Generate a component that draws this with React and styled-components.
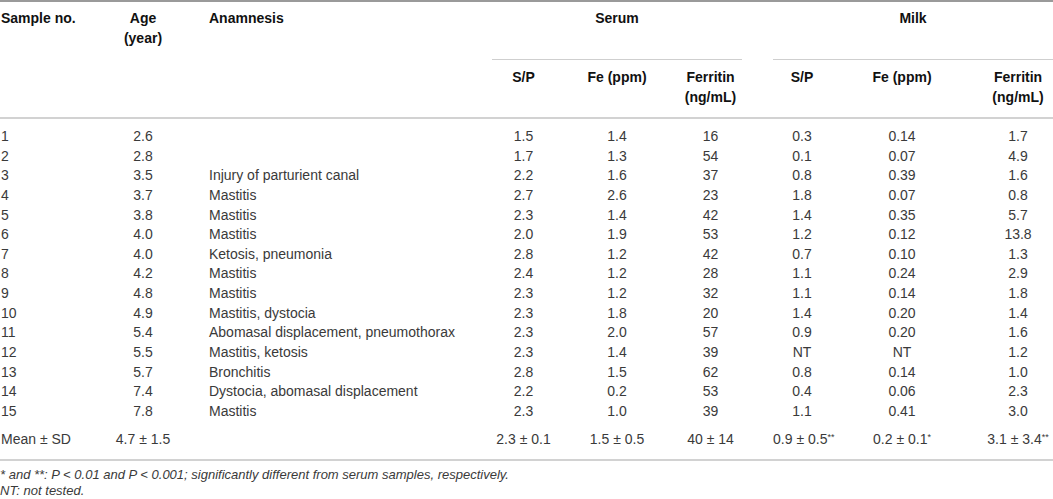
import React from "react";
import styled, { createGlobalStyle } from "styled-components";

const GlobalStyle = createGlobalStyle`
  html, body {
    margin: 0;
    padding: 0;
    background: #fff;
  }
  body {
    font-family: "Liberation Sans", Arial, sans-serif;
    color: #333;
  }
`;

const Page = styled.div`
  width: 1053px;
`;

const Table = styled.table`
  width: 1053px;
  table-layout: fixed;
  border-collapse: collapse;
  font-size: 14px;
  border-top: 2px solid #9a9a9a;
  border-bottom: 2px solid #d2d2d2;
`;

const Head = styled.thead`
  border-bottom: 2px solid #d2d2d2;
`;

const Th = styled.th`
  font-weight: bold;
  color: #111;
  line-height: 20px;
  vertical-align: top;
  padding: ${(p) => (p.$sub ? "7px 0 10px" : "6px 0 0")};
  text-align: ${(p) => p.$align || "center"};
  padding-left: ${(p) => p.$indent || 0}px;
`;

const GroupTh = styled(Th)`
  padding-bottom: 31px;
  border-bottom: 1px solid #cfcfcf;
`;

const Td = styled.td`
  line-height: 19.64px;
  padding: 0;
  padding-left: ${(p) => p.$indent || 0}px;
  text-align: ${(p) => p.$align || "center"};
  color: #3a3a3a;
  white-space: nowrap;
`;

const FirstRow = styled.tr`
  td {
    padding-top: 8px;
  }
`;

const MeanRow = styled.tr`
  td {
    padding-top: 8.4px;
    padding-bottom: 9px;
  }
`;

const Sig = styled.sup`
  font-size: 9px;
  line-height: 0;
  vertical-align: 4px;
`;

const Notes = styled.div`
  margin-top: 6px;
  font-size: 13px;
  line-height: 16px;
  font-style: italic;
  color: #3a3a3a;
`;

const rows = [
  ["1", "2.6", "", "1.5", "1.4", "16", "0.3", "0.14", "1.7"],
  ["2", "2.8", "", "1.7", "1.3", "54", "0.1", "0.07", "4.9"],
  ["3", "3.5", "Injury of parturient canal", "2.2", "1.6", "37", "0.8", "0.39", "1.6"],
  ["4", "3.7", "Mastitis", "2.7", "2.6", "23", "1.8", "0.07", "0.8"],
  ["5", "3.8", "Mastitis", "2.3", "1.4", "42", "1.4", "0.35", "5.7"],
  ["6", "4.0", "Mastitis", "2.0", "1.9", "53", "1.2", "0.12", "13.8"],
  ["7", "4.0", "Ketosis, pneumonia", "2.8", "1.2", "42", "0.7", "0.10", "1.3"],
  ["8", "4.2", "Mastitis", "2.4", "1.2", "28", "1.1", "0.24", "2.9"],
  ["9", "4.8", "Mastitis", "2.3", "1.2", "32", "1.1", "0.14", "1.8"],
  ["10", "4.9", "Mastitis, dystocia", "2.3", "1.8", "20", "1.4", "0.20", "1.4"],
  ["11", "5.4", "Abomasal displacement, pneumothorax", "2.3", "2.0", "57", "0.9", "0.20", "1.6"],
  ["12", "5.5", "Mastitis, ketosis", "2.3", "1.4", "39", "NT", "NT", "1.2"],
  ["13", "5.7", "Bronchitis", "2.8", "1.5", "62", "0.8", "0.14", "1.0"],
  ["14", "7.4", "Dystocia, abomasal displacement", "2.2", "0.2", "53", "0.4", "0.06", "2.3"],
  ["15", "7.8", "Mastitis", "2.3", "1.0", "39", "1.1", "0.41", "3.0"],
];

const pm = " ± ";

const DataCells = ({ row }) => (
  <>
    <Td $align="left" $indent={1}>{row[0]}</Td>
    <Td>{row[1]}</Td>
    <Td $align="left" $indent={33}>{row[2]}</Td>
    <Td>{row[3]}</Td>
    <Td>{row[4]}</Td>
    <Td>{row[5]}</Td>
    <Td />
    <Td>{row[6]}</Td>
    <Td>{row[7]}</Td>
    <Td $indent={10}>{row[8]}</Td>
  </>
);

export default function App() {
  return (
    <Page>
      <GlobalStyle />
      <Table>
        <colgroup>
          <col style={{ width: 110 }} />
          <col style={{ width: 66 }} />
          <col style={{ width: 316 }} />
          <col style={{ width: 63 }} />
          <col style={{ width: 124 }} />
          <col style={{ width: 63 }} />
          <col style={{ width: 31 }} />
          <col style={{ width: 58 }} />
          <col style={{ width: 142 }} />
          <col style={{ width: 80 }} />
        </colgroup>
        <Head>
          <tr>
            <Th rowSpan={2} $align="left" $indent={1}>Sample no.</Th>
            <Th rowSpan={2}>Age<br />(year)</Th>
            <Th rowSpan={2} $align="left" $indent={33}>Anamnesis</Th>
            <GroupTh colSpan={3}>Serum</GroupTh>
            <Th />
            <GroupTh colSpan={3}>Milk</GroupTh>
          </tr>
          <tr>
            <Th $sub>S/P</Th>
            <Th $sub>Fe (ppm)</Th>
            <Th $sub>Ferritin<br />(ng/mL)</Th>
            <Th $sub />
            <Th $sub>S/P</Th>
            <Th $sub>Fe (ppm)</Th>
            <Th $sub $indent={10}>Ferritin<br />(ng/mL)</Th>
          </tr>
        </Head>
        <tbody>
          {rows.map((row, i) =>
            i === 0 ? (
              <FirstRow key={row[0]}><DataCells row={row} /></FirstRow>
            ) : (
              <tr key={row[0]}><DataCells row={row} /></tr>
            )
          )}
          <MeanRow>
            <Td $align="left" $indent={1}>Mean{pm}SD</Td>
            <Td>4.7{pm}1.5</Td>
            <Td />
            <Td>2.3{pm}0.1</Td>
            <Td>1.5{pm}0.5</Td>
            <Td>40{pm}14</Td>
            <Td />
            <Td>0.9{pm}0.5<Sig>**</Sig></Td>
            <Td>0.2{pm}0.1<Sig>*</Sig></Td>
            <Td $indent={10}>3.1{pm}3.4<Sig>**</Sig></Td>
          </MeanRow>
        </tbody>
      </Table>
      <Notes>
        <div>* and **: P &lt; 0.01 and P &lt; 0.001; significantly different from serum samples, respectively.</div>
        <div>NT: not tested.</div>
      </Notes>
    </Page>
  );
}
